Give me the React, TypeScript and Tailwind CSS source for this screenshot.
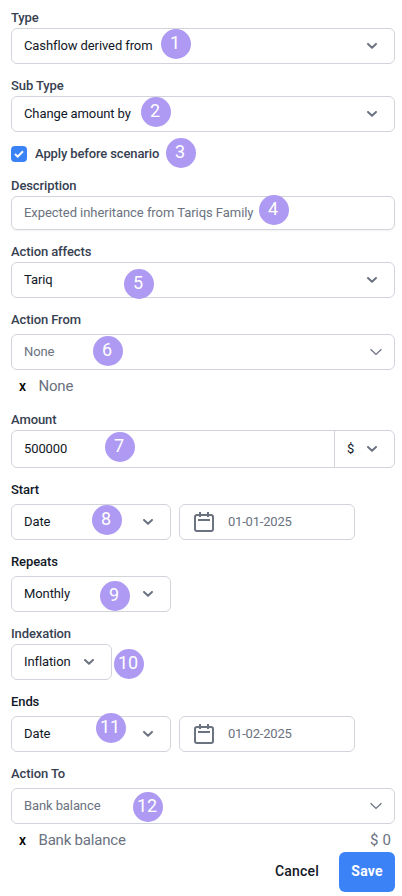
import type { ReactNode } from 'react';

interface FieldProps {
  label: string;
  gap?: boolean;
  dark?: boolean;
  children: ReactNode;
}

function Field({ label, gap, dark, children }: FieldProps) {
  return (
    <div>
      <div className={`h-5 leading-5 font-medium ${dark ? 'text-[#111827]' : 'text-[#374151]'} ${gap ? 'mb-1' : ''}`}>
        {label}
      </div>
      {children}
    </div>
  );
}

function Chevron({ thin }: { thin?: boolean }) {
  if (thin) {
    return (
      <svg width="12" height="8" viewBox="0 0 12 8" fill="none" className="shrink-0">
        <path d="M0.6 1.2L6 6.4L11.4 1.2" stroke="#6b7280" strokeWidth="1.3" />
      </svg>
    );
  }
  return (
    <svg width="10" height="6" viewBox="0 0 10 6" fill="none" className="shrink-0">
      <path d="M1 1L5 4.7L9 1" stroke="#6b7280" strokeWidth="2" strokeLinecap="round" strokeLinejoin="round" />
    </svg>
  );
}

interface SelectProps {
  value: string;
  className: string;
  thin?: boolean;
}

function Select({ value, className, thin }: SelectProps) {
  return (
    <div className={`flex h-9 items-center justify-between rounded-md border border-[#d1d5db] pl-3 ${thin ? 'pr-3 text-[#6b7280]' : 'pr-[17px] text-[#111827]'} ${className}`}>
      <span>{value}</span>
      <Chevron thin={thin} />
    </div>
  );
}

function DateInput({ value }: { value: string }) {
  return (
    <div className="flex h-9 w-44 items-center gap-3.5 rounded-md border border-[#d1d5db] pl-3.5 text-[#6b7280] tracking-[-0.2px]">
      <svg width="20" height="20" viewBox="0 0 20 20" fill="none" stroke="#6b7280" strokeWidth="2">
        <rect x="1" y="3" width="18" height="16" rx="2" />
        <path d="M6 0V5M14 0V5M4 8H16" />
      </svg>
      <span>{value}</span>
    </div>
  );
}

function Selected({ name, amount }: { name: string; amount?: string }) {
  return (
    <div className="mt-1.5 flex h-5 items-center pl-2 pr-1 text-[15px] tracking-[-0.2px] text-[#6b7280]">
      <span className="w-[19.5px] text-sm font-medium text-black">x</span>
      <span className="flex-1">{name}</span>
      <span className="tracking-[0.1px]">{amount}</span>
    </div>
  );
}

// Numbered callouts placed over the form
const markers = [
  { x: 160.5, y: 28.5 },
  { x: 140.5, y: 96.5 },
  { x: 165.5, y: 137.5 },
  { x: 258.5, y: 194.5 },
  { x: 123.5, y: 268.5 },
  { x: 92.5, y: 335.5 },
  { x: 104.5, y: 431.5 },
  { x: 91.5, y: 504.5 },
  { x: 99.5, y: 580.5 },
  { x: 113.5, y: 648.5 },
  { x: 95.5, y: 712.5 },
  { x: 132.5, y: 791.5 },
];

export default function App() {
  return (
    <div className="relative h-[896px] w-[402px] bg-white pl-[11px] pr-[7px] pt-2 font-['Roboto',sans-serif] text-[13px] tracking-[-0.1px]">
      <div className="flex flex-col gap-3">
        <Field label="Type">
          <Select value="Cashflow derived from" className="w-full" />
        </Field>
        <Field label="Sub Type">
          <Select value="Change amount by" className="w-full" />
        </Field>
        <div className="flex h-5 items-center gap-2 font-medium tracking-[-0.13px] text-[#374151]">
          <span className="flex size-4 items-center justify-center rounded bg-[#3b82f6]">
            <svg width="10" height="8" viewBox="0 0 10 8" fill="none" stroke="white" strokeWidth="2">
              <path d="M1 4L3.7 6.6L9 1.2" />
            </svg>
          </span>
          Apply before scenario
        </div>
        <Field label="Description">
          <div className="flex h-[34px] items-center rounded-md border border-[#d1d5db] px-3 tracking-[-0.05px] text-[#6b7280] shadow-xs">
            Expected inheritance from Tariqs Family
          </div>
        </Field>
        <Field label="Action affects">
          <Select value="Tariq" className="w-full" />
        </Field>
        <Field label="Action From" gap>
          <Select value="None" className="w-full" thin />
          <Selected name="None" />
        </Field>
      </div>

      <div className="mt-3.5 flex flex-col gap-3">
        <Field label="Amount">
          <div className="flex h-[38px] rounded-md border border-[#d1d5db] text-[#111827]">
            <div className="flex flex-1 items-center pl-3">500000</div>
            <div className="flex w-[60px] items-center justify-between border-l border-[#d1d5db] pl-3 pr-[17px]">
              <span>$</span>
              <Chevron />
            </div>
          </div>
        </Field>
        <Field label="Start" gap dark>
          <div className="flex gap-2">
            <Select value="Date" className="w-40" />
            <DateInput value="01-01-2025" />
          </div>
        </Field>
        <Field label="Repeats" gap dark>
          <Select value="Monthly" className="w-40" />
        </Field>
        <Field label="Indexation">
          <Select value="Inflation" className="w-[101px]" />
        </Field>
        <Field label="Ends" gap dark>
          <div className="flex gap-2">
            <Select value="Date" className="w-40" />
            <DateInput value="01-02-2025" />
          </div>
        </Field>
        <Field label="Action To" gap>
          <Select value="Bank balance" className="w-full" thin />
          <Selected name="Bank balance" amount="$ 0" />
        </Field>
      </div>

      <div className="mt-0.5 flex justify-end text-sm tracking-[0.2px]">
        <button className="h-10 px-5 pb-0.5 font-medium text-[#111827]">Cancel</button>
        <button className="h-10 w-14 rounded-md bg-[#3b82f6] pb-0.5 font-bold text-white">Save</button>
      </div>

      {markers.map((marker, index) => (
        <div
          key={index}
          className="absolute flex size-[30px] items-center justify-center rounded-full bg-[#ae9af2] pb-px pr-px text-lg leading-none font-normal tracking-normal text-white"
          style={{ left: marker.x, top: marker.y }}
        >
          {index + 1}
        </div>
      ))}
    </div>
  );
}
